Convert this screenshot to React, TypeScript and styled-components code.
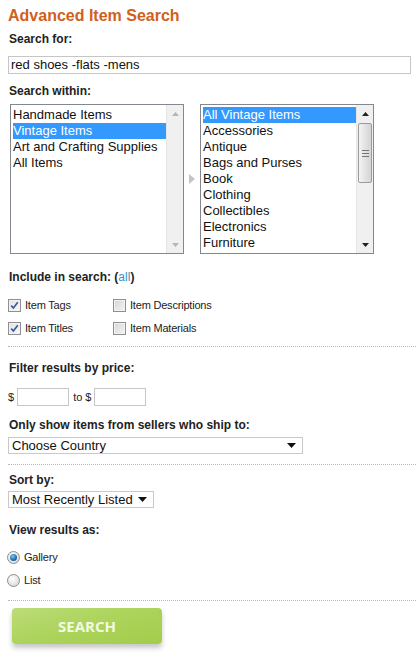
import styled, { createGlobalStyle } from "styled-components";

const GlobalStyle = createGlobalStyle`
  html, body {
    margin: 0;
    padding: 0;
    background: #ffffff;
  }
  body {
    font-family: "Liberation Sans", Arial, sans-serif;
    color: #222222;
  }
`;

const Page = styled.form`
  width: 408px;
  padding: 6px 0 0 8px;
`;

const Title = styled.h1`
  margin: 0;
  font-size: 16px;
  line-height: 20px;
  font-weight: bold;
  color: #d2601a;
`;

const Label = styled.div<{ $top: number }>`
  margin-top: ${({ $top }) => $top}px;
  font-size: 12px;
  line-height: 14px;
  font-weight: bold;
  color: #222222;
  padding-left: 1px;
`;

const AllLink = styled.a`
  font-weight: normal;
  color: #3a8fbf;
  text-decoration: none;
`;

const TextInput = styled.div`
  margin-top: 10px;
  width: 399px;
  height: 16px;
  border: 1px solid #c6c6c6;
  font-size: 13px;
  line-height: 16px;
  padding-left: 2px;
  box-sizing: content-box;
  color: #111;
`;

const ListRow = styled.div`
  margin-top: 6px;
  margin-left: 2px;
  display: flex;
  align-items: center;
`;

const ListBox = styled.div`
  width: 172px;
  height: 148px;
  border: 1px solid #828790;
  display: flex;
  background: #fff;
`;

const Options = styled.div`
  flex: 1;
  padding: 2px 0 0 2px;
  overflow: hidden;
`;

const Option = styled.div<{ $selected?: boolean }>`
  height: 16px;
  font-size: 13px;
  line-height: 16px;
  white-space: nowrap;
  color: ${({ $selected }) => ($selected ? "#ffffff" : "#111111")};
  background: ${({ $selected }) => ($selected ? "#3399ff" : "transparent")};
`;

const ScrollBar = styled.div`
  width: 16px;
  background: #f0f0f0;
  border-left: 1px solid #e6e6e6;
  display: flex;
  flex-direction: column;
  align-items: center;
`;

const ScrollArrow = styled.div`
  height: 17px;
  width: 16px;
  display: flex;
  align-items: center;
  justify-content: center;
`;

const ScrollTrack = styled.div`
  flex: 1;
  width: 16px;
  display: flex;
  flex-direction: column;
`;

const Thumb = styled.div`
  margin: 1px 1px 0 1px;
  height: 58px;
  border: 1px solid #9b9b9b;
  border-radius: 2px;
  background: linear-gradient(to right, #f4f4f4, #e3e3e3 50%, #d4d4d4);
  display: flex;
  align-items: center;
  justify-content: center;
`;

const Pointer = styled.div`
  width: 16px;
  display: flex;
  justify-content: center;
`;

const CheckGrid = styled.div`
  margin-top: 13px;
  display: grid;
  grid-template-columns: 105px auto;
  row-gap: 7px;
`;

const CheckItem = styled.label`
  display: flex;
  align-items: center;
  height: 16px;
  font-size: 11px;
  letter-spacing: -0.2px;
  color: #222;
  gap: 4px;
`;

const CheckBox = styled.span<{ $checked?: boolean }>`
  width: 11px;
  height: 11px;
  border: 1px solid #8f8f8f;
  background: ${({ $checked }) =>
    $checked
      ? "linear-gradient(135deg, #dfe3ea, #f7f8fa)"
      : "linear-gradient(135deg, #d6d6d6, #f4f4f4)"};
  box-shadow: inset 0 0 0 1px #f2f2f2;
  display: flex;
  align-items: center;
  justify-content: center;
`;

const Divider = styled.div<{ $top: number }>`
  margin-top: ${({ $top }) => $top}px;
  border-top: 1px dotted #b8b8b8;
  width: 408px;
  height: 0;
`;

const PriceRow = styled.div`
  margin-top: 13px;
  display: flex;
  align-items: center;
  font-size: 11px;
  color: #222;
`;

const PriceInput = styled.div`
  width: 50px;
  height: 16px;
  border: 1px solid #c6c6c6;
  margin: 0 4px 0 3px;
`;

const Select = styled.div<{ $width: number; $top: number }>`
  margin-top: ${({ $top }) => $top}px;
  width: ${({ $width }) => $width}px;
  height: 15px;
  border: 1px solid #c9c9c9;
  display: flex;
  align-items: center;
  justify-content: space-between;
  font-size: 13px;
  line-height: 15px;
  padding: 0 6px 0 3px;
  box-sizing: content-box;
  color: #111;
`;

const RadioList = styled.div`
  margin-top: 12px;
  display: flex;
  flex-direction: column;
  gap: 7px;
`;

const RadioItem = styled.label`
  display: flex;
  align-items: center;
  height: 16px;
  font-size: 11px;
  letter-spacing: -0.2px;
  color: #222;
  gap: 4px;
  margin-left: -1px;
`;

const Radio = styled.span<{ $checked?: boolean }>`
  width: 11px;
  height: 11px;
  border-radius: 50%;
  border: 1px solid #8d8d8d;
  background: radial-gradient(circle at 40% 35%, #ffffff, #d2d2d2);
  display: flex;
  align-items: center;
  justify-content: center;

  &::after {
    content: "";
    display: ${({ $checked }) => ($checked ? "block" : "none")};
    width: 7px;
    height: 7px;
    border-radius: 50%;
    background: radial-gradient(circle at 40% 35%, #7fc6f0, #1d6aa8 60%, #0f4a80);
  }
`;

const SearchButton = styled.button`
  margin: 7px 0 14px 4px;
  width: 150px;
  height: 36px;
  border: 0;
  border-radius: 4px;
  background: linear-gradient(165deg, #bcdc78 0%, #add45c 45%, #a3cc4b 100%);
  box-shadow: 0 4px 5px rgba(0, 0, 0, 0.22);
  color: #f3f9e4;
  font-family: "Open Sans", "Liberation Sans", sans-serif;
  font-weight: bold;
  font-size: 15px;
  display: block;
`;

const UpArrow = ({ color }: { color: string }) => (
  <svg width="7" height="4" viewBox="0 0 7 4">
    <path d="M0 4 L3.5 0 L7 4 Z" fill={color} />
  </svg>
);

const DownArrow = ({ color }: { color: string }) => (
  <svg width="7" height="4" viewBox="0 0 7 4">
    <path d="M0 0 L7 0 L3.5 4 Z" fill={color} />
  </svg>
);

const SelectArrow = () => (
  <svg width="9" height="5" viewBox="0 0 9 5">
    <path d="M0 0 L9 0 L4.5 5 Z" fill="#111" />
  </svg>
);

const Grip = () => (
  <svg width="7" height="7" viewBox="0 0 7 7">
    <path d="M0 0.5 H7 M0 3.5 H7 M0 6.5 H7" stroke="#777" strokeWidth="1" />
  </svg>
);

const CheckMark = () => (
  <svg width="9" height="9" viewBox="0 0 9 9">
    <path
      d="M1.2 4.6 L3.4 7 L7.8 1.2"
      fill="none"
      stroke="#3e5a94"
      strokeWidth="1.7"
    />
  </svg>
);

const scopes = ["Handmade Items", "Vintage Items", "Art and Crafting Supplies", "All Items"];
const categories = [
  "All Vintage Items",
  "Accessories",
  "Antique",
  "Bags and Purses",
  "Book",
  "Clothing",
  "Collectibles",
  "Electronics",
  "Furniture",
];

export default function App() {
  return (
    <>
      <GlobalStyle />
      <Page onSubmit={(e) => e.preventDefault()}>
        <Title>Advanced Item Search</Title>

        <Label $top={6}>Search for:</Label>
        <TextInput>red shoes -flats -mens</TextInput>

        <Label $top={10}>Search within:</Label>
        <ListRow>
          <ListBox>
            <Options>
              {scopes.map((s) => (
                <Option key={s} $selected={s === "Vintage Items"}>
                  {s}
                </Option>
              ))}
            </Options>
            <ScrollBar>
              <ScrollArrow>
                <UpArrow color="#b5b5b5" />
              </ScrollArrow>
              <ScrollTrack />
              <ScrollArrow>
                <DownArrow color="#b5b5b5" />
              </ScrollArrow>
            </ScrollBar>
          </ListBox>
          <Pointer>
            <svg width="6" height="10" viewBox="0 0 6 10">
              <path d="M0 0 L6 5 L0 10 Z" fill="#c4c4c4" />
            </svg>
          </Pointer>
          <ListBox>
            <Options>
              {categories.map((c) => (
                <Option key={c} $selected={c === "All Vintage Items"}>
                  {c}
                </Option>
              ))}
            </Options>
            <ScrollBar>
              <ScrollArrow>
                <UpArrow color="#222" />
              </ScrollArrow>
              <ScrollTrack>
                <Thumb>
                  <Grip />
                </Thumb>
              </ScrollTrack>
              <ScrollArrow>
                <DownArrow color="#222" />
              </ScrollArrow>
            </ScrollBar>
          </ListBox>
        </ListRow>

        <Label $top={16}>
          Include in search: (<AllLink href="#">all</AllLink>)
        </Label>
        <CheckGrid>
          <CheckItem>
            <CheckBox $checked>
              <CheckMark />
            </CheckBox>
            Item Tags
          </CheckItem>
          <CheckItem>
            <CheckBox />
            Item Descriptions
          </CheckItem>
          <CheckItem>
            <CheckBox $checked>
              <CheckMark />
            </CheckBox>
            Item Titles
          </CheckItem>
          <CheckItem>
            <CheckBox />
            Item Materials
          </CheckItem>
        </CheckGrid>

        <Divider $top={10} />

        <Label $top={14}>Filter results by price:</Label>
        <PriceRow>
          $<PriceInput />
          to ${" "}
          <PriceInput />
        </PriceRow>

        <Label $top={12}>Only show items from sellers who ship to:</Label>
        <Select $width={284} $top={5}>
          Choose Country
          <SelectArrow />
        </Select>

        <Divider $top={10} />

        <Label $top={8}>Sort by:</Label>
        <Select $width={135} $top={4}>
          Most Recently Listed
          <SelectArrow />
        </Select>

        <Label $top={15}>View results as:</Label>
        <RadioList>
          <RadioItem>
            <Radio $checked />
            Gallery
          </RadioItem>
          <RadioItem>
            <Radio />
            List
          </RadioItem>
        </RadioList>

        <Divider $top={12} />

        <SearchButton type="submit">SEARCH</SearchButton>
      </Page>
    </>
  );
}
